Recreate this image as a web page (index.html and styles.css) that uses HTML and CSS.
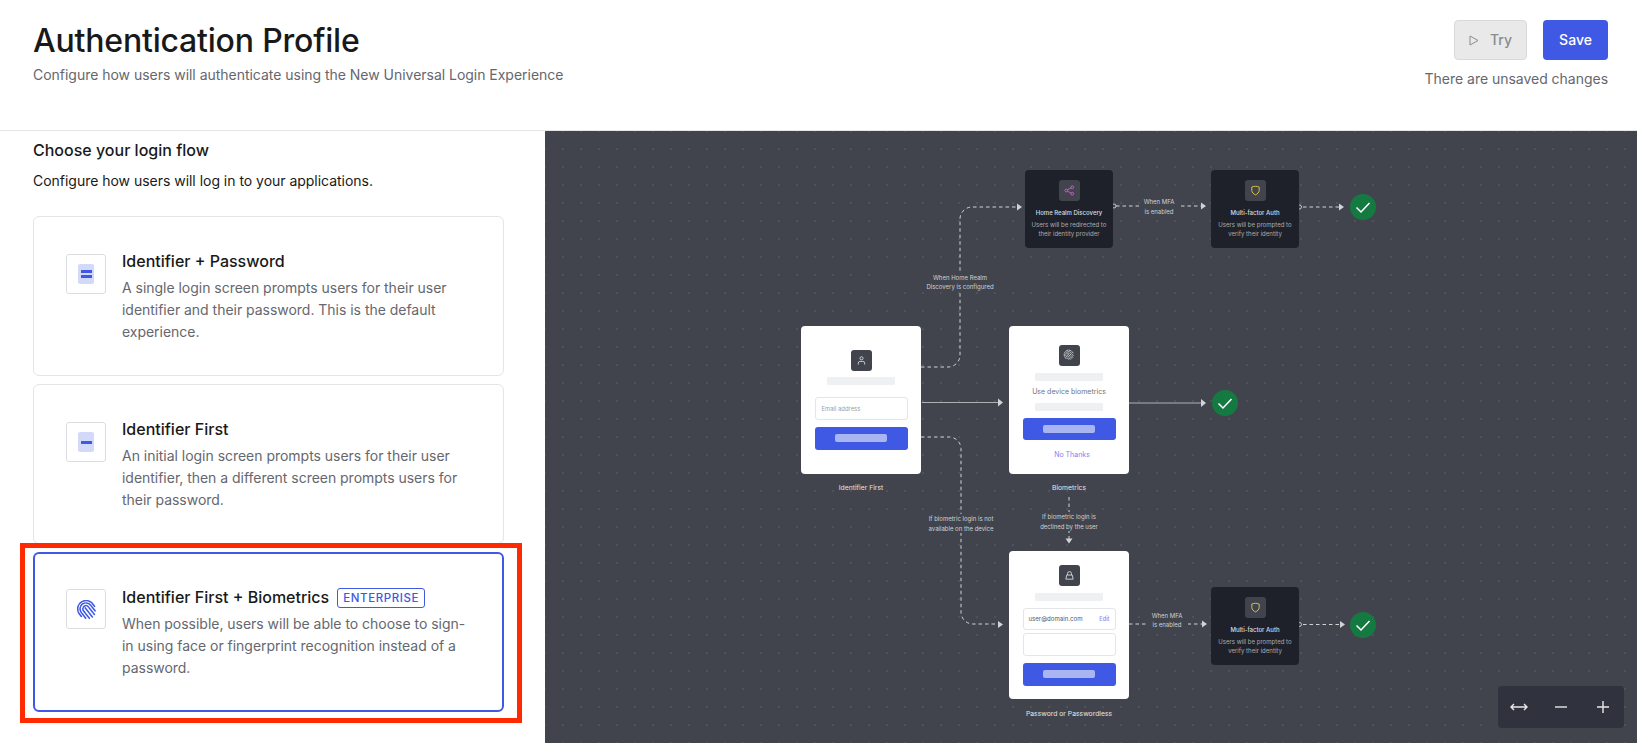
FILE: index.html
```html
<!DOCTYPE html>
<html lang="en">
<head>
<meta charset="utf-8">
<title>Authentication Profile</title>
<link rel="stylesheet" href="styles.css">
</head>
<body>
<header class="top">
  <div>
    <h1>Authentication Profile</h1>
    <p class="sub">Configure how users will authenticate using the New Universal Login Experience</p>
  </div>
  <div class="actions">
    <div class="btns">
      <button class="btn try"><svg class="play" viewBox="0 0 10 11"><path d="M1 1l8 4.5L1 10z"/></svg>Try</button>
      <button class="btn save">Save</button>
    </div>
    <p class="sub unsaved">There are unsaved changes</p>
  </div>
</header>
<main class="main">
  <section class="left">
    <h2>Choose your login flow</h2>
    <p class="lead">Configure how users will log in to your applications.</p>
    <div class="cards">
      <article class="card">
        <div class="ibox"><div class="doc"><i></i><i></i></div></div>
        <div class="ctext">
          <h3>Identifier + Password</h3>
          <p>A single login screen prompts users for their user identifier and their password. This is the default experience.</p>
        </div>
      </article>
      <article class="card">
        <div class="ibox"><div class="doc"><i></i></div></div>
        <div class="ctext">
          <h3>Identifier First</h3>
          <p>An initial login screen prompts users for their user identifier, then a different screen prompts users for their password.</p>
        </div>
      </article>
      <article class="card active">
        <div class="ibox">
          <svg class="fp" viewBox="0 0 24 24"><g transform="rotate(-38 12 12)"><path d="M1.500 15V11a10.500 10.500 0 0 1 21 0v4M4.500 20V11a7.500 7.500 0 0 1 15 0v9M8 23V11a4 4 0 0 1 8 0v12M12 9.500V24"/></g></svg>
        </div>
        <div class="ctext">
          <h3>Identifier First + Biometrics <span class="badge">ENTERPRISE</span></h3>
          <p>When possible, users will be able to choose to sign-in using face or fingerprint recognition instead of a password.</p>
        </div>
      </article>
    </div>
  </section>

  <section class="canvas">
    <svg class="edges" viewBox="545 131 1092 612">
      <g class="dash">
        <path d="M921 367h27a12 12 0 0 0 12-12V219a12 12 0 0 1 12-12h46"/>
        <path d="M1116 206h86"/>
        <path d="M1303 207h37"/>
        <path d="M921 437h28a12 12 0 0 1 12 12V612a12 12 0 0 0 12 12h26"/>
        <path d="M1069 497v42"/>
        <path d="M1129 624h75"/>
        <path d="M1303 624.500h38"/>
      </g>
      <g class="solid">
        <path d="M922 402.500h78"/>
        <path d="M1129 403h74"/>
      </g>
      <g class="heads">
        <path d="M1017 203.500l5 3.500-5 3.500z"/>
        <path d="M1201 202.500l5 3.500-5 3.500z"/>
        <path d="M1339 203.500l5 3.500-5 3.500z"/>
        <path d="M998 398.500l5 4-5 4z"/>
        <path d="M1201 399l5 4-5 4z"/>
        <path d="M998 621l5 3.500-5 3.500z"/>
        <path d="M1065.500 538.500l3.500 5 3.500-5z"/>
        <path d="M1202 620.500l5 3.500-5 3.500z"/>
        <path d="M1340 621l5 3.500-5 3.500z"/>
      </g>
      <g class="ports">
        <circle cx="1114" cy="206" r="2"/>
        <circle cx="1299.500" cy="207" r="2"/>
        <circle cx="1299.500" cy="624.500" r="2"/>
      </g>
    </svg>

    <div class="elabel e1">When Home Realm<br>Discovery is configured</div>
    <div class="elabel e2">When MFA<br>is enabled</div>
    <div class="elabel e3">If biometric login is not<br>available on the device</div>
    <div class="elabel e4">If biometric login is<br>declined by the user</div>
    <div class="elabel e5">When MFA<br>is enabled</div>

    <div class="screen n-a">
      <div class="nicon"><svg viewBox="0 0 12 12"><circle cx="6" cy="3.600" r="1.700"/><path d="M2.500 10.500V9a2 2 0 0 1 2-2h3a2 2 0 0 1 2 2v1.500"/></svg></div>
      <div class="bar b-a"></div>
      <div class="field email">Email address</div>
      <div class="cta"><span></span></div>
    </div>
    <div class="caption c-a">Identifier First</div>

    <div class="screen n-b">
      <div class="nicon"><svg viewBox="0 0 24 24"><g transform="rotate(-38 12 12)"><path d="M3 15V11a9 9 0 0 1 18 0v4M6 19V11a6 6 0 0 1 12 0v8M9 21V11a3 3 0 0 1 6 0v10M12 10v12"/></g></svg></div>
      <div class="bar"></div>
      <div class="use">Use device biometrics</div>
      <div class="bar b-2"></div>
      <div class="cta"><span></span></div>
      <div class="nothanks">No Thanks</div>
    </div>
    <div class="caption c-b">Biometrics</div>

    <div class="screen n-c">
      <div class="nicon"><svg viewBox="0 0 12 12"><path d="M3.800 5.500V4a2.200 2.200 0 0 1 4.400 0v1.500M3 5.500h6l1 4.500H2z"/></svg></div>
      <div class="bar"></div>
      <div class="field user"><span>user@domain.com</span><b>Edit</b></div>
      <div class="field pass"></div>
      <div class="cta"><span></span></div>
    </div>
    <div class="caption c-c">Password or Passwordless</div>

    <div class="step n-hrd">
      <div class="nicon"><svg class="pink" viewBox="0 0 12 12"><circle cx="9" cy="2.500" r="1.500"/><circle cx="2.500" cy="6" r="1.500"/><circle cx="9" cy="9.500" r="1.500"/><path d="M3.800 5.200l3.900-2M3.800 6.800l3.900 2"/></svg></div>
      <h4>Home Realm Discovery</h4>
      <p>Users will be redirected to<br>their identity provider</p>
    </div>
    <div class="step n-mfa1">
      <div class="nicon"><svg class="yellow" viewBox="0 0 12 12"><path d="M2 2.200C4.500 1.200 7.500 1.200 10 2.200V6c0 2.200-2 3.800-4 4.800C4 9.800 2 8.200 2 6z"/></svg></div>
      <h4>Multi-factor Auth</h4>
      <p>Users will be prompted to<br>verify their identity</p>
    </div>
    <div class="step n-mfa2">
      <div class="nicon"><svg class="yellow" viewBox="0 0 12 12"><path d="M2 2.200C4.500 1.200 7.500 1.200 10 2.200V6c0 2.200-2 3.800-4 4.800C4 9.800 2 8.200 2 6z"/></svg></div>
      <h4>Multi-factor Auth</h4>
      <p>Users will be prompted to<br>verify their identity</p>
    </div>

    <div class="check k1"><svg viewBox="0 0 26 26"><path d="M6.500 13.500l4.500 4.500 8.500-9"/></svg></div>
    <div class="check k2"><svg viewBox="0 0 26 26"><path d="M6.500 13.500l4.500 4.500 8.500-9"/></svg></div>
    <div class="check k3"><svg viewBox="0 0 26 26"><path d="M6.500 13.500l4.500 4.500 8.500-9"/></svg></div>

    <div class="zoom">
      <svg viewBox="0 0 18 12"><path d="M1 6h16M4 3L1 6l3 3M14 3l3 3-3 3"/></svg>
      <svg viewBox="0 0 12 12"><path d="M0 6h12"/></svg>
      <svg viewBox="0 0 12 12"><path d="M0 6h12M6 0v12"/></svg>
    </div>
  </section>

  <div class="highlight"></div>
</main>
</body>
</html>
```
FILE: styles.css
```css
* { box-sizing: border-box; }
html, body { margin: 0; height: 743px; overflow: hidden; background: #fff; }
body { font-family: Inter, "Liberation Sans", sans-serif; color: #191919; }
h1, h2, h3, h4, p { margin: 0; font-weight: 500; }

.top { height: 131px; padding: 21px 29px 0 33px; display: flex; justify-content: space-between; border-bottom: 1px solid #e3e5e7; }
h1 { font-size: 32px; line-height: 40px; font-weight: 500; letter-spacing: -0.2px; }
.sub { font-size: 14px; line-height: 20px; font-weight: 400; color: #65676e; margin-top: 4px; letter-spacing: -0.025px; }
.actions { display: flex; flex-direction: column; align-items: flex-end; margin-top: -1px; }
.btns { display: flex; gap: 16px; }
.btn { height: 40px; border-radius: 4px; font: 500 14px/20px Inter, sans-serif; display: flex; align-items: center; justify-content: center; border: 0; }
.try { width: 73px; background: #e9e9ea; border: 1px solid #d9d9db; color: #8b8b90; gap: 11px; }
.play { width: 10px; height: 11px; fill: none; stroke: #8b8b90; stroke-width: 1; }
.save { width: 65px; background: #3f59e4; color: #fff; }
.unsaved { margin-top: 9px; }

.main { position: relative; display: flex; height: 612px; }
.left { width: 545px; padding: 7px 41px 0 33px; }
h2 { font-size: 16px; line-height: 24px; font-weight: 450; }
.lead { font-size: 14px; line-height: 22px; margin-top: 8px; font-weight: 400; letter-spacing: -0.025px; }
.cards { display: flex; flex-direction: column; gap: 8px; margin-top: 24px; }
.card { height: 160px; border: 1px solid #e3e5e7; border-radius: 6px; padding: 0 32px; display: flex; align-items: center; gap: 16px; }
.card.active { border: 2px solid #3f59e4; padding: 0 31px; }
.ibox { width: 40px; height: 40px; flex: none; border: 1px solid #dcdde0; border-radius: 3px; display: flex; align-items: center; justify-content: center; align-self: flex-start; margin-top: 37px; }
.card.active .ibox { margin-top: 35px; }
.doc { width: 16px; height: 20px; background: #d3d9f8; border-radius: 2px; display: flex; flex-direction: column; justify-content: center; align-items: center; gap: 2px; }
.doc i { display: block; width: 11px; height: 3px; background: #3f59e4; }
.fp { width: 19px; height: 19px; fill: none; stroke: #3f59e4; stroke-width: 2; stroke-linecap: round; stroke-dasharray: 7 1.600; }
.ctext { flex: 1; }
h3 { font-size: 16px; line-height: 24px; font-weight: 450; display: flex; align-items: center; gap: 8px; }
.ctext p { font-size: 14px; line-height: 22px; font-weight: 400; color: #65676e; margin-top: 4px; letter-spacing: -0.025px; }
.badge { font-size: 11.500px; line-height: 18px; height: 20px; padding: 0 5px; margin-top: 2px; border: 1px solid #3f59e4; border-radius: 3px; color: #3f59e4; letter-spacing: 0.6px; font-weight: 500; }

.canvas { position: relative; flex: 1; height: 612px; overflow: hidden; background-color: #41444c; background-image: radial-gradient(circle at 1px 1px, #4f525a 0.7px, transparent 1px); background-size: 18px 18px; background-position: -1px -1px; }
.edges { position: absolute; left: 0; top: 0; width: 1092px; height: 612px; }
.dash { fill: none; stroke: #d2d3d6; stroke-width: 1; stroke-dasharray: 3.500 3; }
.solid { fill: none; stroke: #aeb0b4; stroke-width: 1.200; }
.heads { fill: #d2d3d6; }
.ports { fill: #41444c; stroke: #e2e3e5; stroke-width: 0.800; }

.elabel { position: absolute; background: #41444c; color: #d0d1d4; font-size: 6px; line-height: 9.500px; text-align: center; white-space: nowrap; }
.e1 { left: 341px; top: 141.500px; width: 148px; padding: 0 40px; }
.e2 { left: 595px; top: 66px; width: 38px; }
.e3 { left: 340px; top: 383px; width: 152px; padding: 0 40px; }
.e4 { left: 484px; top: 381px; width: 80px; }
.e5 { left: 601px; top: 479.500px; width: 42px; }

.screen { position: absolute; width: 120px; height: 148px; background: #fff; border-radius: 4px; display: flex; flex-direction: column; align-items: center; }
.n-a { left: 256px; top: 194.500px; padding-top: 24px; }
.n-b { left: 464px; top: 194.500px; padding-top: 19px; }
.n-c { left: 464px; top: 419.500px; padding-top: 14px; }
.nicon { width: 21px; height: 21px; flex: none; border-radius: 3px; background: #41444c; display: flex; align-items: center; justify-content: center; }
.nicon svg { width: 11px; height: 11px; fill: none; stroke: #e4e5e7; stroke-width: 0.900; }
.n-b .nicon svg { width: 12px; height: 12px; stroke-width: 1.500; stroke-dasharray: 5 1; }
.nicon svg.pink { stroke: #d765cf; }
.nicon svg.yellow { stroke: #f2d94e; }
.bar { width: 68px; height: 8px; flex: none; margin-top: 7px; background: #eff0f2; border-radius: 1px; }
.b-a { margin-top: 6px; }
.b-2 { margin-top: 7px; }
.use { font-size: 7px; line-height: 10px; margin-top: 6px; margin-bottom: -1px; color: #70727a; white-space: nowrap; }
.field { width: 93px; flex: none; border: 1px solid #e3e5e7; border-radius: 3px; font-size: 5.900px; display: flex; align-items: center; justify-content: space-between; white-space: nowrap; }
.email { height: 23px; margin-top: 12px; padding: 0 6px; color: #9c9da3; }
.user { height: 22px; margin-top: 7px; padding: 0 5px; color: #55575e; font-size: 6.100px; }
.user b { font-weight: 500; color: #8a8cf3; font-size: 5.600px; }
.pass { height: 23px; margin-top: 3px; }
.cta { width: 93px; height: 23px; flex: none; margin-top: 7px; background: #3f59e4; border-radius: 3px; display: flex; align-items: center; justify-content: center; }
.cta span { width: 52px; height: 8px; background: #a9b5f1; border-radius: 2px; }
.n-b .cta { height: 22px; }
.nothanks { font-size: 7px; line-height: 10px; margin-top: 10px; color: #7f81f2; padding-left: 6px; white-space: nowrap; }

.caption { position: absolute; width: 120px; text-align: center; color: #e4e5e6; font-size: 6.800px; line-height: 10px; white-space: nowrap; }
.c-a { left: 256px; top: 352px; }
.c-b { left: 464px; top: 352px; }
.c-c { left: 464px; top: 577.500px; }

.step { position: absolute; width: 88px; height: 78px; padding-top: 10px; background: #1e212a; border-radius: 4px; display: flex; flex-direction: column; align-items: center; text-align: center; }
.step .nicon { background: #41444c; }
.n-hrd { left: 480px; top: 39px; }
.n-mfa1 { left: 666px; top: 39px; }
.n-mfa2 { left: 666px; top: 456px; }
h4 { font-size: 6px; line-height: 9.500px; margin-top: 7px; color: #dcdde0; white-space: nowrap; }
.step p { font-size: 6.050px; line-height: 9.500px; font-weight: 400; margin-top: 2px; color: #a9abb0; white-space: nowrap; }

.check { position: absolute; width: 26px; height: 26px; border-radius: 50%; background: #147a42; }
.check svg { display: block; width: 26px; height: 26px; fill: none; stroke: #fff; stroke-width: 1.500; }
.k1 { left: 805px; top: 63px; }
.k2 { left: 667px; top: 258.500px; }
.k3 { left: 805px; top: 480.500px; }

.zoom { position: absolute; left: 953px; top: 555px; width: 126px; height: 42px; background: #30333d; border-radius: 4px; display: grid; grid-template-columns: repeat(3, 1fr); align-items: center; justify-items: center; }
.zoom svg { height: 12px; width: 12px; fill: none; stroke: #e8e8ea; stroke-width: 1.400; }
.zoom svg:first-child { width: 18px; }

.highlight { position: absolute; left: 20px; top: 412px; width: 502px; height: 180px; border: 5px solid #ff2a00; pointer-events: none; }
```
